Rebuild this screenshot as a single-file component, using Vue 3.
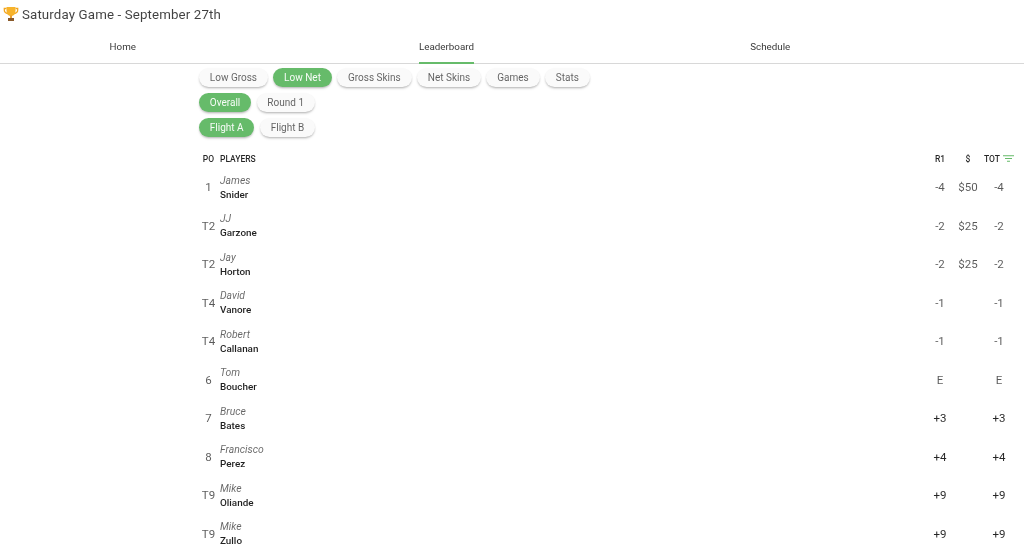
<script setup>
const row1 = [
  { t: 'Low Gross' }, { t: 'Low Net', on: true }, { t: 'Gross Skins' }, { t: 'Net Skins' }, { t: 'Games' }, { t: 'Stats' }
]
const row2 = [{ t: 'Overall', on: true }, { t: 'Round 1' }]
const row3 = [{ t: 'Flight A', on: true }, { t: 'Flight B' }]
const chipRows = [row1, row2, row3]
const players = [
  ['1', 'James', 'Snider', '-4', '$50', '-4'],
  ['T2', 'JJ', 'Garzone', '-2', '$25', '-2'],
  ['T2', 'Jay', 'Horton', '-2', '$25', '-2'],
  ['T4', 'David', 'Vanore', '-1', '', '-1'],
  ['T4', 'Robert', 'Callanan', '-1', '', '-1'],
  ['6', 'Tom', 'Boucher', 'E', '', 'E'],
  ['7', 'Bruce', 'Bates', '+3', '', '+3'],
  ['8', 'Francisco', 'Perez', '+4', '', '+4'],
  ['T9', 'Mike', 'Oliande', '+9', '', '+9'],
  ['T9', 'Mike', 'Zullo', '+9', '', '+9']
]
const scoreClass = (s) => ({ over: s.startsWith('+') })
</script>

<template>
  <div class="page">
    <header class="title">
      <svg class="trophy" width="16" height="16" viewBox="0 0 16 16">
        <path d="M3.500 2.500H1.300v1.600C1.300 6 3.200 7.400 5 7.600" fill="none" stroke="#f2a51e" stroke-width="1.300" />
        <path d="M12.500 2.500h2.200v1.600C14.700 6 12.800 7.400 11 7.600" fill="none" stroke="#f2a51e" stroke-width="1.300" />
        <path d="M3.500 1h9v4c0 3-1.900 5-4.500 5S3.500 8 3.500 5z" fill="#f7b32b" />
        <rect x="7.100" y="9.500" width="1.800" height="2.500" fill="#e8971c" />
        <rect x="5" y="12" width="6" height="3" fill="#8a5a2b" />
      </svg>
      <span>Saturday Game - September 27th</span>
    </header>
    <nav class="tabs">
      <div class="tab">Home</div>
      <div class="tab active">Leaderboard</div>
      <div class="tab">Schedule</div>
    </nav>
    <main class="content">
      <div v-for="(chips, i) in chipRows" :key="i" class="chips">
        <span v-for="c in chips" :key="c.t" class="chip" :class="{ on: c.on }">{{ c.t }}</span>
      </div>
      <table class="board">
        <thead>
          <tr>
            <th class="pos">PO</th>
            <th class="name">PLAYERS</th>
            <th class="num">R1</th>
            <th class="num">$</th>
            <th class="num tot">
              <span>TOT</span>
              <svg class="sort" width="11" height="7" viewBox="0 0 11 7">
                <path d="M0 .75h11M2 3.500h7M4 6.250h3" stroke="#66bb6a" stroke-width="1.100" fill="none" />
              </svg>
            </th>
          </tr>
        </thead>
        <tbody>
          <tr v-for="(p, i) in players" :key="i">
            <td class="pos">{{ p[0] }}</td>
            <td class="name"><em>{{ p[1] }}</em><strong>{{ p[2] }}</strong></td>
            <td class="num" :class="scoreClass(p[3])">{{ p[3] }}</td>
            <td class="num">{{ p[4] }}</td>
            <td class="num" :class="scoreClass(p[5])">{{ p[5] }}</td>
          </tr>
        </tbody>
      </table>
    </main>
  </div>
</template>

<style>
html, body { margin: 0; overflow: hidden; background: #fff; }
</style>

<style scoped>
.page {
  width: 1024px;
  height: 557px;
  overflow: hidden;
  will-change: opacity;
  font-family: Roboto, "Liberation Sans", sans-serif;
  color: rgba(0, 0, 0, 0.87);
}
.title {
  height: 28px;
  display: flex;
  align-items: center;
  gap: 3px;
  padding-left: 3px;
  font-size: 13.300px;
  letter-spacing: 0.13px;
  color: rgba(0, 0, 0, 0.75);
}
.trophy { flex: none; }
.tabs {
  height: 35px;
  display: grid;
  grid-template-columns: 245.500px 402px 245.500px;
  border-bottom: 1px solid #d8d8d8;
  font-size: 9.800px;
}
.tab {
  display: flex;
  align-items: center;
  justify-content: center;
  padding-top: 2px;
  position: relative;
  color: rgba(0, 0, 0, 0.8);
}
.tab.active::after {
  content: "";
  position: absolute;
  left: 50%;
  bottom: -1px;
  width: 55px;
  margin-left: -27.500px;
  height: 2px;
  background: #66bb6a;
}
.content {
  padding: 4px 8px 0 199px;
}
.chips {
  display: flex;
  gap: 5.500px;
  height: 25px;
  align-items: flex-start;
}
.chip {
  height: 19px;
  line-height: 19px;
  padding: 0 10.800px;
  border-radius: 10px;
  background: #fafafa;
  font-size: 10px;
  color: rgba(0, 0, 0, 0.62);
  box-shadow: 0 2px 3px -1px rgba(0, 0, 0, 0.25), 0 1px 2px rgba(0, 0, 0, 0.1);
}
.chip.on {
  background: #66bb6a;
  color: rgba(255, 255, 255, 0.95);
}
.board {
  width: 817px;
  border-collapse: collapse;
  table-layout: fixed;
  margin-top: 7px;
}
th {
  height: 18px;
  padding: 0;
  font-size: 8.500px;
  font-weight: 500;
  color: rgba(0, 0, 0, 0.85);
}
td {
  height: 38.500px;
  padding: 0;
  font-size: 11.500px;
  color: rgba(0, 0, 0, 0.65);
}
td.over { color: rgba(0, 0, 0, 0.85); }
.pos { width: 19px; text-align: center; }
th.name, td.name { text-align: left; }
.name { padding-left: 2px; }
.num { width: 28px; text-align: center; }
th.tot { width: 32px; white-space: nowrap; text-align: left; padding-left: 2px; }
.sort { margin-left: 3px; }
em {
  display: block;
  font-size: 10.400px;
  line-height: 13px;
  color: rgba(0, 0, 0, 0.6);
}
strong {
  display: block;
  font-size: 9.900px;
  line-height: 14px;
  padding-top: 1px;
  margin-bottom: -1px;
  font-weight: 500;
  color: rgba(0, 0, 0, 0.87);
}
</style>
